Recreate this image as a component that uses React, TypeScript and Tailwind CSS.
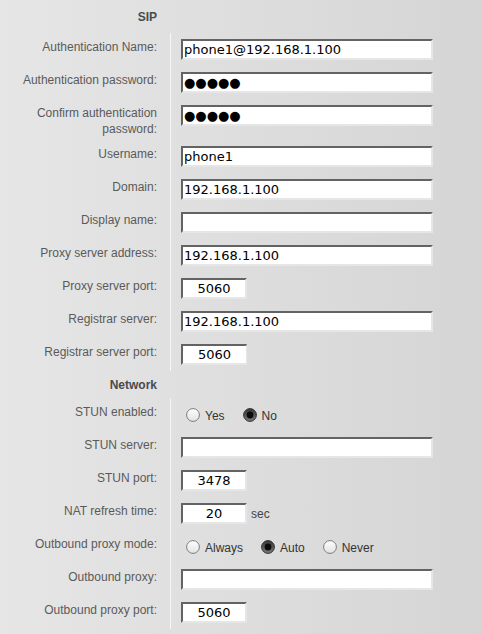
import React from "react";

type Field =
  | { kind: "header"; label: string; height: string }
  | { kind: "text"; label: string; value: string }
  | { kind: "port"; label: string; value: string; suffix?: string; focused?: boolean }
  | { kind: "radio"; label: string; options: string[]; selected: string };

const fields: Field[] = [
  { kind: "header", label: "SIP", height: "h-[33px]" },
  { kind: "text", label: "Authentication Name:", value: "phone1@192.168.1.100" },
  { kind: "text", label: "Authentication password:", value: "●●●●●" },
  { kind: "text", label: "Confirm authentication password:", value: "●●●●●" },
  { kind: "text", label: "Username:", value: "phone1" },
  { kind: "text", label: "Domain:", value: "192.168.1.100" },
  { kind: "text", label: "Display name:", value: "" },
  { kind: "text", label: "Proxy server address:", value: "192.168.1.100" },
  { kind: "port", label: "Proxy server port:", value: "5060" },
  { kind: "text", label: "Registrar server:", value: "192.168.1.100" },
  { kind: "port", label: "Registrar server port:", value: "5060", focused: true },
  { kind: "header", label: "Network", height: "h-[27px]" },
  { kind: "radio", label: "STUN enabled:", options: ["Yes", "No"], selected: "No" },
  { kind: "text", label: "STUN server:", value: "" },
  { kind: "port", label: "STUN port:", value: "3478" },
  { kind: "port", label: "NAT refresh time:", value: "20", suffix: "sec" },
  { kind: "radio", label: "Outbound proxy mode:", options: ["Always", "Auto", "Never"], selected: "Auto" },
  { kind: "text", label: "Outbound proxy:", value: "" },
  { kind: "port", label: "Outbound proxy port:", value: "5060" },
];

const labelFont = "font-['Liberation_Sans',Arial,sans-serif] text-[12px] leading-[16px]";
const inputBase =
  "block h-[21px] border-t-2 border-l-2 border-t-[#636363] border-l-[#636363] border-b-2 border-r-2 border-b-[#e6e6e6] border-r-[#e6e6e6] bg-white font-['DejaVu_Sans',sans-serif] text-[13px] leading-[15px] text-black outline-none";

// little round radio button, drawn like the old GTK theme
const RadioDot = ({ checked }: { checked: boolean }) => (
  <svg width="14" height="14" viewBox="0 0 14 14" className="shrink-0">
    <defs>
      <linearGradient id="rOff" x1="0" y1="0" x2="0" y2="1">
        <stop offset="0" stopColor="#ffffff" />
        <stop offset="1" stopColor="#e2e2e2" />
      </linearGradient>
      <linearGradient id="rOn" x1="0" y1="0" x2="0" y2="1">
        <stop offset="0" stopColor="#353535" />
        <stop offset="1" stopColor="#7a7a7a" />
      </linearGradient>
    </defs>
    <circle cx="7" cy="7" r="6.4" fill={checked ? "url(#rOn)" : "url(#rOff)"} stroke={checked ? "#333" : "#7c7c7c"} strokeWidth="1" />
    {checked && <circle cx="7" cy="7" r="3.4" fill="#0a0a0a" />}
  </svg>
);

const Row = ({ field }: { field: Field }) => {
  if (field.kind === "header") {
    return (
      <div className={`flex items-center ${field.height}`}>
        <div className={`w-[171px] pr-[14px] text-right font-bold text-[#4a4a4a] ${labelFont}`}>
          {field.label}
        </div>
      </div>
    );
  }

  let control: React.ReactNode = null;
  if (field.kind === "text") {
    control = <input readOnly value={field.value} className={`${inputBase} w-[252px] px-[1px]`} />;
  } else if (field.kind === "port") {
    control = (
      <div className="flex h-[21px] items-center">
        <input
          readOnly
          value={field.value}
          className={`${inputBase} w-[66px] text-center ${field.focused ? "border-r-[1px] border-r-[#1a1a1a]" : ""}`}
        />
        {field.suffix && <span className={`ml-[4px] text-[#444] ${labelFont}`}>{field.suffix}</span>}
      </div>
    );
  } else {
    control = (
      <div className="flex h-[21px] items-center pl-[5px]">
        {field.options.map((opt) => (
          <label key={opt} className="mr-[18px] flex items-center">
            <RadioDot checked={opt === field.selected} />
            <span className={`ml-[5px] pt-[2px] text-[#333] ${labelFont}`}>{opt}</span>
          </label>
        ))}
      </div>
    );
  }

  return (
    <div className="flex">
      <div
        className={`w-[171px] shrink-0 border-r border-[#f6f6f6] pb-[3px] pl-[6px] pr-[13px] pt-[6px] text-right text-[#5a5a5a] ${labelFont}`}
      >
        {field.label}
      </div>
      <div className="flex items-start py-[6px] pl-[10px]">{control}</div>
    </div>
  );
};

const App = () => {
  return (
    <div className="min-h-screen bg-gradient-to-r from-[#e6e6e6] to-[#d5d5d5]">
      {fields.map((f, i) => (
        <Row key={i} field={f} />
      ))}
    </div>
  );
};

export default App;
